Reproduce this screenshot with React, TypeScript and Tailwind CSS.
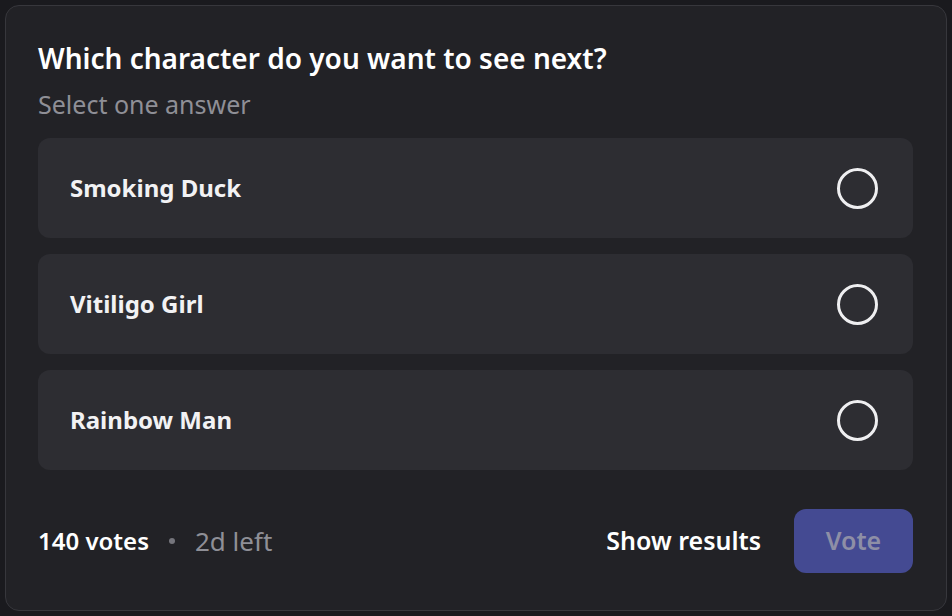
const options = ["Smoking Duck", "Vitiligo Girl", "Rainbow Man"];

const font = { fontFamily: '"Noto Sans", "Open Sans", sans-serif' };

export default function App() {
  return (
    <div className="h-[616px] w-[952px] bg-[#1a1a1e] p-[5px]" style={font}>
      <div className="flex h-[606px] flex-col rounded-[14px] border border-[#37373c] bg-[#222226] pl-[32px] pr-[33px] pt-[34px]">
        <h1 className="text-[28px] font-semibold leading-[36px] text-white">
          Which character do you want to see next?
        </h1>
        <p className="mt-[12px] text-[25px] leading-[32px] text-[#8f8f96]">Select one answer</p>

        <div className="mt-[18px] flex flex-col gap-[16px]">
          {options.map((o) => (
            <div
              key={o}
              className="flex h-[100px] items-center justify-between rounded-[12px] bg-[#2d2d32] pl-[32px] pr-[35px]"
            >
              <span className="text-[24px] font-bold text-[#f2f2f4]">{o}</span>
              <span className="h-[41px] w-[41px] rounded-full border-[3px] border-[#efeff1]" />
            </div>
          ))}
        </div>

        <div className="mt-[39px] flex items-center justify-between">
          <div className="flex items-center text-[24px]">
            <span className="font-semibold text-white">140 votes</span>
            <span className="mx-[20px] h-[6px] w-[6px] rounded-full bg-[#75757c]" />
            <span className="text-[26px] text-[#8f8f96]">2d left</span>
          </div>
          <div className="flex items-center gap-[33px]">
            <span className="text-[25px] font-semibold text-white">Show results</span>
            <button className="h-[64px] w-[119px] rounded-[12px] bg-[#444a92] text-[25px] font-semibold text-[#8e8fa6]">
              Vote
            </button>
          </div>
        </div>
      </div>
    </div>
  );
}
